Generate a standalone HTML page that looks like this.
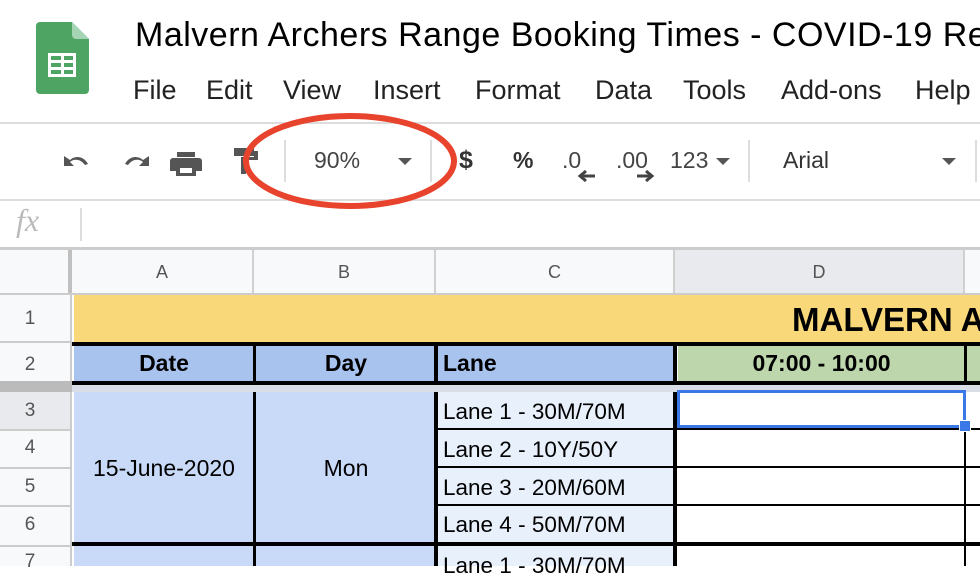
<!DOCTYPE html>
<html><head><meta charset="utf-8"><style>
*{margin:0;padding:0;box-sizing:border-box}
body{width:980px;height:566px;overflow:hidden;background:#fff;font-family:"Liberation Sans",Arial,sans-serif;position:relative}
.a{position:absolute;white-space:nowrap}
.t{font-size:23px;color:#000}
.b{font-weight:bold}
.m{position:absolute;top:75px;font-size:27px;color:#222;white-space:nowrap}
.rn{position:absolute;left:0;width:60px;text-align:center;font-size:19px;color:#555}
.ch{position:absolute;top:250px;height:44px;line-height:44px;text-align:center;font-size:18px;color:#555;background:#f8f9fa;border-right:2px solid #d0d0d0}
.tb{font-size:24px;color:#444}
</style></head><body>
<svg class="a" style="left:36px;top:22px" width="53" height="72" viewBox="0 0 53 72">
<path d="M4 0H36L53 17V68a4 4 0 0 1-4 4H4a4 4 0 0 1-4-4V4a4 4 0 0 1 4-4z" fill="#4ea463"/>
<path d="M36 0L53 17H40a4 4 0 0 1-4-4z" fill="#a6d5b5"/>
<rect x="12" y="31" width="28" height="24" fill="#fff"/>
<g fill="#4ea463"><rect x="15" y="34" width="10" height="4"/><rect x="28" y="34" width="9" height="4"/><rect x="15" y="41" width="10" height="4"/><rect x="28" y="41" width="9" height="4"/><rect x="15" y="48" width="10" height="4"/><rect x="28" y="48" width="9" height="4"/></g>
</svg>
<div class="a" style="left:135px;top:16px;font-size:34px;color:#000;letter-spacing:0.5px">Malvern Archers Range Booking Times - COVID-19 Re</div>
<div class="m" style="left:133px">File</div>
<div class="m" style="left:206px">Edit</div>
<div class="m" style="left:283px">View</div>
<div class="m" style="left:373px">Insert</div>
<div class="m" style="left:475px">Format</div>
<div class="m" style="left:595px">Data</div>
<div class="m" style="left:683px">Tools</div>
<div class="m" style="left:781px">Add-ons</div>
<div class="m" style="left:915px">Help</div>
<div class="a" style="left:0;top:122px;width:980px;height:2px;background:#ddd"></div>
<svg class="a" style="left:60px;top:148px" width="210" height="30" viewBox="0 0 210 30" fill="#555">
<path d="M4 8v10h10l-4-4c3-3 10-4 15 3l3-1C24 8 15 7 10 12z"/>
<path d="M89 8v10H79l4-4c-3-3-10-4-15 3l-3-1C69 8 78 7 83 12z"/>
<path d="M117 4h18v5h-18z M113 10h26a3 3 0 0 1 3 3v10h-6v5h-20v-5h-6V13a3 3 0 0 1 3-3z"/>
<rect x="120" y="20" width="12" height="5" fill="#fff"/>
<path d="M174 0h20v8h-20z M194 3h4v9h-12v14h-5V9h13z"/>
</svg>
<div class="a" style="left:284px;top:140px;width:2px;height:42px;background:#ddd"></div>
<div class="a tb" style="left:314px;top:147px;font-size:23px">90%</div>
<div class="a" style="left:398px;top:158px;border:7px solid transparent;border-top:7px solid #555"></div>
<div class="a" style="left:430px;top:140px;width:2px;height:42px;background:#ddd"></div>
<div class="a tb b" style="left:459px;top:146px;font-size:25px;color:#333">$</div>
<div class="a tb b" style="left:513px;top:147px;font-size:23px;color:#333">%</div>
<div class="a tb" style="left:562px;top:147px;font-size:23px">.0</div>
<svg class="a" style="left:576px;top:170px" width="20" height="12"><path d="M19 6H6M10 1L4 6l6 5" stroke="#444" stroke-width="3" fill="none"/></svg>
<div class="a tb" style="left:616px;top:147px;font-size:23px">.00</div>
<svg class="a" style="left:636px;top:170px" width="20" height="12"><path d="M1 6h13M10 1l6 5-6 5" stroke="#444" stroke-width="3" fill="none"/></svg>
<div class="a tb" style="left:670px;top:147px;font-size:23px">123</div>
<div class="a" style="left:716px;top:158px;border:7px solid transparent;border-top:7px solid #555"></div>
<div class="a" style="left:748px;top:140px;width:2px;height:42px;background:#ddd"></div>
<div class="a tb" style="left:783px;top:147px;font-size:23px;color:#333">Arial</div>
<div class="a" style="left:942px;top:158px;border:7px solid transparent;border-top:7px solid #555"></div>
<div class="a" style="left:975px;top:140px;width:2px;height:42px;background:#ddd"></div>
<div class="a" style="left:0;top:199px;width:980px;height:2px;background:#ddd"></div>
<div class="a" style="left:16px;top:202px;font-size:32px;color:#bbb;font-family:'Liberation Serif',serif;font-style:italic">fx</div>
<div class="a" style="left:80px;top:208px;width:2px;height:33px;background:#ddd"></div>
<div class="a" style="left:0;top:247px;width:980px;height:3px;background:#ccc"></div>
<div class="ch" style="left:0;width:72px;border-right:4px solid #c0c0c0"></div>
<div class="ch" style="left:72px;width:182px">A</div>
<div class="ch" style="left:254px;width:182px">B</div>
<div class="ch" style="left:436px;width:239px">C</div>
<div class="ch" style="left:675px;width:290px;background:#e8eaed">D</div>
<div class="ch" style="left:965px;width:20px"></div>
<div class="a" style="left:0;top:293px;width:980px;height:2px;background:#ccc"></div>
<div class="a" style="left:0;top:295px;width:72px;height:271px;background:#f8f9fa;border-right:2px solid #ccc"></div>
<div class="a" style="left:0;top:381px;width:72px;height:11px;background:#bbb"></div>
<div class="a" style="left:0;top:392px;width:70px;height:37px;background:#e8eaed"></div>
<div class="rn" style="top:308px">1</div>
<div class="rn" style="top:354px">2</div>
<div class="rn" style="top:400px">3</div>
<div class="rn" style="top:437px">4</div>
<div class="rn" style="top:476px">5</div>
<div class="rn" style="top:514px">6</div>
<div class="rn" style="top:551px">7</div>
<div class="a" style="left:0;top:341px;width:70px;height:2px;background:#ccc"></div>
<div class="a" style="left:0;top:429px;width:70px;height:2px;background:#ccc"></div>
<div class="a" style="left:0;top:467px;width:70px;height:2px;background:#ccc"></div>
<div class="a" style="left:0;top:505px;width:70px;height:2px;background:#ccc"></div>
<div class="a" style="left:0;top:545px;width:70px;height:2px;background:#ccc"></div>
<div class="a" style="left:74px;top:295px;width:906px;height:48px;background:#f9d87a"></div>
<div class="a t b" style="left:792px;top:301px;font-size:33px">MALVERN A</div>
<div class="a" style="left:72px;top:342px;width:908px;height:4px;background:#000"></div>
<div class="a" style="left:74px;top:346px;width:601px;height:35px;background:#a9c3ef"></div>
<div class="a" style="left:678px;top:346px;width:302px;height:35px;background:#bdd6ac"></div>
<div class="a t b" style="left:74px;top:350px;width:180px;text-align:center;font-size:23px">Date</div>
<div class="a t b" style="left:256px;top:350px;width:180px;text-align:center;font-size:23px">Day</div>
<div class="a t b" style="left:443px;top:350px;font-size:23px">Lane</div>
<div class="a t b" style="left:678px;top:350px;width:287px;text-align:center;font-size:23px">07:00 - 10:00</div>
<div class="a" style="left:253px;top:346px;width:3px;height:35px;background:#000"></div>
<div class="a" style="left:434px;top:346px;width:4px;height:35px;background:#000"></div>
<div class="a" style="left:673px;top:346px;width:4px;height:35px;background:#000"></div>
<div class="a" style="left:964px;top:346px;width:3px;height:35px;background:#000"></div>
<div class="a" style="left:72px;top:381px;width:908px;height:4px;background:#000"></div>
<div class="a" style="left:72px;top:385px;width:908px;height:7px;background:#dadfe7"></div>
<div class="a" style="left:74px;top:392px;width:362px;height:174px;background:#c9daf8"></div>
<div class="a" style="left:438px;top:392px;width:237px;height:174px;background:#e8f0fc"></div>
<div class="a" style="left:253px;top:392px;width:3px;height:174px;background:#000"></div>
<div class="a" style="left:434px;top:392px;width:4px;height:174px;background:#000"></div>
<div class="a" style="left:673px;top:392px;width:4px;height:174px;background:#000"></div>
<div class="a" style="left:964px;top:392px;width:2px;height:174px;background:#000"></div>
<div class="a" style="left:438px;top:428px;width:542px;height:2px;background:#000"></div>
<div class="a" style="left:438px;top:466px;width:542px;height:2px;background:#000"></div>
<div class="a" style="left:438px;top:504px;width:542px;height:2px;background:#000"></div>
<div class="a" style="left:72px;top:542px;width:908px;height:4px;background:#000"></div>
<div class="a t" style="left:74px;top:455px;width:180px;text-align:center;font-size:23px">15-June-2020</div>
<div class="a t" style="left:256px;top:455px;width:180px;text-align:center;font-size:23px">Mon</div>
<div class="a t" style="left:443px;top:399px;font-size:22.5px">Lane 1 - 30M/70M</div>
<div class="a t" style="left:443px;top:437px;font-size:22.5px">Lane 2 - 10Y/50Y</div>
<div class="a t" style="left:443px;top:475px;font-size:22.5px">Lane 3 - 20M/60M</div>
<div class="a t" style="left:443px;top:512px;font-size:22.5px">Lane 4 - 50M/70M</div>
<div class="a t" style="left:443px;top:553px;font-size:22.5px">Lane 1 - 30M/70M</div>
<div class="a" style="left:677px;top:390px;width:289px;height:38px;border:3px solid #3b78e7"></div>
<div class="a" style="left:959px;top:420px;width:12px;height:12px;background:#3b78e7;border:1px solid #fff"></div>
<svg class="a" style="left:0;top:0" width="980" height="566"><ellipse cx="350" cy="161" rx="104" ry="45" fill="none" stroke="#e8432d" stroke-width="6"/></svg>
</body></html>
